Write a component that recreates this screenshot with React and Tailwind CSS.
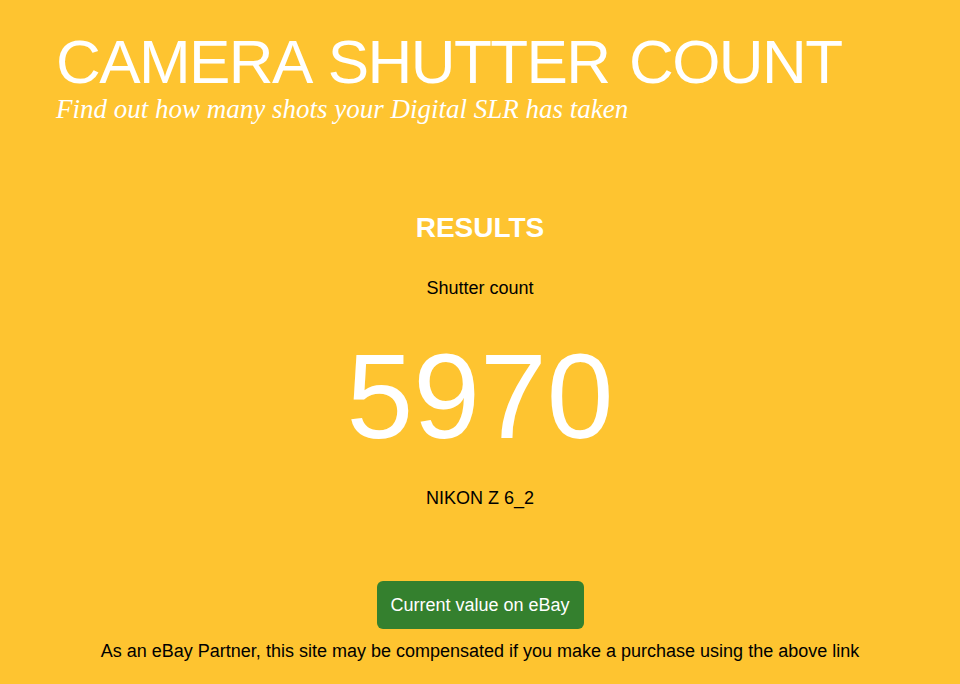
import React from 'react';

const App = () => {
  return (
    <div className="min-h-[684px] bg-[#fec430] font-['Liberation_Sans',Arial,sans-serif]">
      <header className="pl-[56px] pt-[26px]">
        <h1 className="text-[62px] leading-[72px] tracking-[-1.6px] text-white [word-spacing:4px]">CAMERA SHUTTER COUNT</h1>
        <p className="-mt-[4px] font-['Liberation_Serif',Georgia,serif] text-[27px] italic leading-[30px] text-white">
          Find out how many shots your Digital SLR has taken
        </p>
      </header>

      <main className="flex flex-col items-center pt-[87px] text-center">
        <h2 className="text-[28px] font-bold leading-[34px] text-white">RESULTS</h2>
        <p className="mt-[33px] text-[18px] leading-[20px] text-black">Shutter count</p>
        <div className="mt-[28px] text-[120px] leading-[140px] text-white">5970</div>
        <p className="mt-[22px] text-[18px] leading-[20px] text-black">NIKON Z 6_2</p>
        <a
          href="#"
          className="mt-[73px] flex h-[48px] w-[207px] items-center justify-center rounded-[6px] bg-[#34802e] text-[18px] text-white"
        >
          Current value on eBay
        </a>
        <p className="mt-[10px] text-[18px] leading-[24px] text-black">
          As an eBay Partner, this site may be compensated if you make a purchase using the above link
        </p>
      </main>
    </div>
  );
};

export default App;
